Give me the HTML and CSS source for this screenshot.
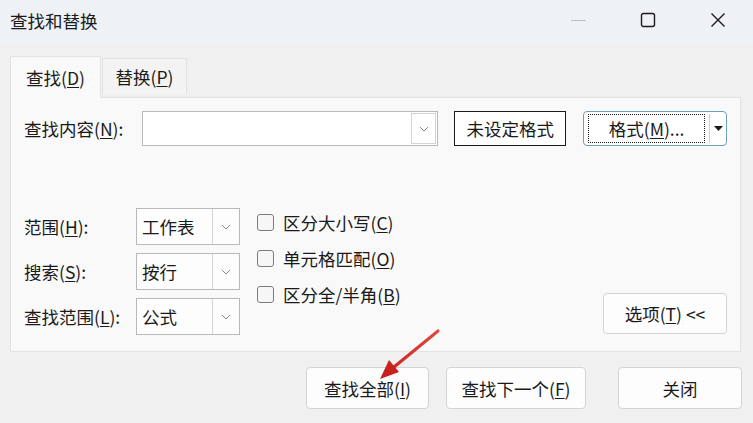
FILE: index.html
```html
<!DOCTYPE html>
<html lang="zh-CN">
<head>
    <meta charset="UTF-8">
    <meta name="viewport" content="width=device-width, initial-scale=1.0">
    <title>查找和替换</title>
    <link rel="stylesheet" href="styles.css">
</head>
<body>

    <div class="dialog">
        <div class="titlebar">
            <span class="title">查找和替换</span>
            <div class="win-controls">
                <span class="win-btn win-min"></span>
                <span class="win-btn">
                    <svg width="16" height="16" viewBox="0 0 16 16"><rect x="1.5" y="1.5" width="13" height="13" rx="2" fill="none" stroke="#1a1a1a" stroke-width="1.4"/></svg>
                </span>
                <span class="win-btn">
                    <svg width="16" height="16" viewBox="0 0 16 16"><path d="M1.5 1.5 L14.5 14.5 M14.5 1.5 L1.5 14.5" stroke="#1a1a1a" stroke-width="1.4" fill="none"/></svg>
                </span>
            </div>
        </div>

        <div class="content">
            <div class="tabs">
                <div class="tab active">查找(<u>D</u>)</div>
                <div class="tab">替换(<u>P</u>)</div>
            </div>

            <div class="panel">
                <div class="find-row">
                    <label class="label find-label">查找内容(<u>N</u>):</label>
                    <div class="combo find-combo">
                        <input type="text" class="combo-text">
                        <span class="combo-arrow boxed">
                            <svg width="10" height="6" viewBox="0 0 10 6"><path d="M1 1 L5 5 L9 1" stroke="#8a8a8a" fill="none" stroke-width="1"/></svg>
                        </span>
                    </div>
                    <button class="btn-plain">未设定格式</button>
                    <div class="split-btn">
                        <span class="split-main"><span class="focus-rect">格式(<u>M</u>)...</span></span>
                        <span class="split-drop">
                            <svg width="9" height="5" viewBox="0 0 9 5"><path d="M0 0 L9 0 L4.5 5 Z" fill="#1a1a1a"/></svg>
                        </span>
                    </div>
                </div>

                <div class="options">
                    <div class="option-grid">
                        <label class="label">范围(<u>H</u>):</label>
                        <div class="combo small-combo">
                            <span class="combo-text">工作表</span>
                            <span class="combo-arrow">
                                <svg width="10" height="6" viewBox="0 0 10 6"><path d="M1 1 L5 5 L9 1" stroke="#8a8a8a" fill="none" stroke-width="1"/></svg>
                            </span>
                        </div>
                        <label class="label">搜索(<u>S</u>):</label>
                        <div class="combo small-combo">
                            <span class="combo-text">按行</span>
                            <span class="combo-arrow">
                                <svg width="10" height="6" viewBox="0 0 10 6"><path d="M1 1 L5 5 L9 1" stroke="#8a8a8a" fill="none" stroke-width="1"/></svg>
                            </span>
                        </div>
                        <label class="label">查找范围(<u>L</u>):</label>
                        <div class="combo small-combo">
                            <span class="combo-text">公式</span>
                            <span class="combo-arrow">
                                <svg width="10" height="6" viewBox="0 0 10 6"><path d="M1 1 L5 5 L9 1" stroke="#8a8a8a" fill="none" stroke-width="1"/></svg>
                            </span>
                        </div>
                    </div>

                    <div class="checks">
                        <label class="check"><span class="box"></span>区分大小写(<u>C</u>)</label>
                        <label class="check"><span class="box"></span>单元格匹配(<u>O</u>)</label>
                        <label class="check"><span class="box"></span>区分全/半角(<u>B</u>)</label>
                    </div>

                    <button class="btn btn-options">选项(<u>T</u>) &lt;&lt;</button>
                </div>
            </div>

            <div class="actions">
                <button class="btn btn-all">查找全部(<u>I</u>)</button>
                <button class="btn btn-next">查找下一个(<u>F</u>)</button>
                <button class="btn btn-close">关闭</button>
            </div>
        </div>

        <!-- red pointer arrow drawn on top of the screenshot -->
        <svg class="pointer" width="753" height="423" viewBox="0 0 753 423">
            <defs>
                <linearGradient id="arrowfade" x1="438" y1="331" x2="382" y2="377" gradientUnits="userSpaceOnUse">
                    <stop offset="0" stop-color="#e24a44"/>
                    <stop offset="1" stop-color="#c8201c"/>
                </linearGradient>
            </defs>
            <path d="M438 331 L394 367" stroke="url(#arrowfade)" stroke-width="3.2" stroke-linecap="round" fill="none"/>
            <path d="M380 379 L389 360 L399 372 Z" fill="#c8201c"/>
        </svg>
    </div>

</body>
</html>
```

FILE: styles.css
```css
body {
    margin: 0;
    padding: 0;
    font-family: "Noto Sans CJK SC", "Noto Sans", sans-serif;
    font-size: 17.5px;
    color: #1a1a1a;
    background-color: #f0f0f0;
}

.dialog {
    position: relative;
    width: 753px;
    height: 423px;
    overflow: hidden;
    background-color: #f0f0f0;
}

u {
    text-decoration: underline;
    text-decoration-thickness: 1px;
    text-underline-offset: 2px;
}

/* title bar */
.titlebar {
    height: 44px;
    display: flex;
    align-items: center;
    justify-content: space-between;
    padding-left: 10px;
    background-color: #eef1f5;
}

.title {
    font-size: 17.5px;
    margin-top: -4px;
}

.win-controls {
    display: flex;
    align-items: center;
    margin-top: -4px;
}

.win-btn {
    width: 70px;
    height: 30px;
    display: flex;
    align-items: center;
    justify-content: center;
}

.win-min::before {
    content: "";
    width: 15px;
    height: 1px;
    background-color: #b9bcc0;
}

.content {
    padding: 12px 11px 0 10px;
}

/* tabs */
.tabs {
    display: flex;
    align-items: flex-end;
    height: 41px;
    position: relative;
    z-index: 1;
}

.tab {
    height: 36px;
    width: 85px;
    justify-content: center;
    display: flex;
    align-items: center;
    border: 1px solid #e2e2e2;
    border-bottom: none;
    background-color: #f3f3f3;
    margin-left: 1px;
    margin-bottom: 3px;
    box-sizing: border-box;
}

.tab.active {
    height: 42px;
    width: 91px;
    margin-left: 0;
    margin-bottom: -1px;
    background-color: #f9f9f9;
}

/* tab panel */
.panel {
    width: 731px;
    height: 255px;
    box-sizing: border-box;
    padding: 13px 13px 0 13px;
    background-color: #f9f9f9;
    border: 1px solid #e2e2e2;
}

.label {
    white-space: nowrap;
}

.find-row {
    display: flex;
    align-items: center;
    height: 35px;
}

.find-label {
    width: 118px;
}

.combo {
    display: flex;
    box-sizing: border-box;
    border: 1px solid #b9b9b9;
    background-color: #fff;
}

.find-combo {
    width: 297px;
    height: 35px;
    padding: 1px;
}

.combo-text {
    flex: 1;
    min-width: 0;
    border: none;
    outline: none;
    background: transparent;
    font: inherit;
    padding: 0 5px;
    display: flex;
    align-items: center;
}

.combo-arrow {
    width: 26px;
    display: flex;
    align-items: center;
    justify-content: center;
    border-left: 1px solid #d4d4d4;
}

.combo-arrow.boxed {
    border: 1px solid #d4d4d4;
    box-sizing: border-box;
    width: 25px;
}

.btn-plain {
    margin-left: 16px;
    width: 112px;
    height: 35px;
    border: 1px solid #1a1a1a;
    background-color: #fff;
    font: inherit;
    color: inherit;
    padding: 0;
}

.split-btn {
    margin-left: 17px;
    width: 144px;
    height: 35px;
    box-sizing: border-box;
    display: flex;
    border: 1px solid #6f9db4;
    border-radius: 4px;
    background-color: #fff;
}

.split-main {
    flex: 1;
    padding: 3px 0 3px 4px;
    display: flex;
    border-right: 1px solid #cfcfcf;
    margin: 2px 0;
}

.focus-rect {
    flex: 1;
    display: flex;
    align-items: center;
    justify-content: center;
    border: 1px dotted #1a1a1a;
    margin: -3px 4px -3px 0;
}

.split-drop {
    width: 16px;
    display: flex;
    align-items: center;
    justify-content: center;
}

/* lower options */
.options {
    display: flex;
    margin-top: 62px;
}

.option-grid {
    display: grid;
    grid-template-columns: 112px 104px;
    grid-auto-rows: 37px;
    row-gap: 8px;
    align-items: center;
}

.small-combo {
    height: 37px;
    background-color: #fdfdfd;
}

.checks {
    display: flex;
    flex-direction: column;
    gap: 8px;
    margin-left: 17px;
}

.check {
    height: 28px;
    display: flex;
    align-items: center;
}

.box {
    width: 17px;
    height: 17px;
    box-sizing: border-box;
    border: 1px solid #7c7c7c;
    border-radius: 3px;
    background-color: #f6f6f6;
    margin-right: 9px;
}

.btn {
    font: inherit;
    color: inherit;
    background-color: #fdfdfd;
    border: 1px solid #d3d3d3;
    border-radius: 4px;
    padding: 0;
}

.btn-options {
    margin-left: auto;
    align-self: flex-end;
    margin-bottom: 1px;
    width: 124px;
    height: 41px;
}

/* bottom buttons */
.actions {
    display: flex;
    justify-content: flex-end;
    margin-top: 15px;
}

.actions .btn {
    height: 42px;
}

.btn-all {
    width: 123px;
}

.btn-next {
    width: 140px;
    margin-left: 17px;
}

.btn-close {
    width: 124px;
    margin-left: 32px;
}

.pointer {
    position: absolute;
    left: 0;
    top: 0;
    pointer-events: none;
}
```
